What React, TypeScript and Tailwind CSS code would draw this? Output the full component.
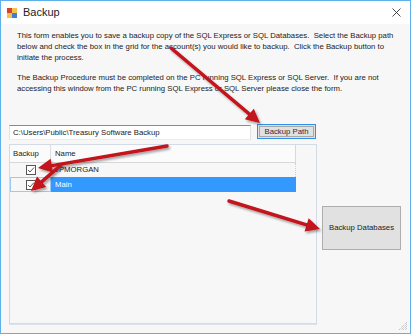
import { FC } from 'react';

type Pt = [number, number];

const arrows: [Pt, Pt][] = [
  [[170, 47], [259, 122]],
  [[166, 145], [37, 167]],
  [[60, 164], [30, 190]],
  [[228, 200], [319, 228]],
];

const headPoints = (from: Pt, to: Pt, len = 14, half = 7) => {
  const dx = to[0] - from[0];
  const dy = to[1] - from[1];
  const d = Math.hypot(dx, dy);
  const ux = dx / d;
  const uy = dy / d;
  const bx = to[0] - ux * len;
  const by = to[1] - uy * len;
  return {
    base: [bx, by] as Pt,
    pts: `${to[0]},${to[1]} ${bx - uy * half},${by + ux * half} ${bx + uy * half},${by - ux * half}`,
  };
};

const Arrows: FC = () => (
  <svg className="absolute inset-0 pointer-events-none" width={411} height={334}>
    <defs>
      <filter id="sh" x="-20%" y="-20%" width="140%" height="140%">
        <feDropShadow dx="1.5" dy="2" stdDeviation="1.2" floodColor="#000" floodOpacity="0.35" />
      </filter>
    </defs>
    {arrows.map(([from, to], i) => {
      const h = headPoints(from, to);
      return (
        <g key={i} filter="url(#sh)">
          <line
            x1={from[0]}
            y1={from[1]}
            x2={h.base[0]}
            y2={h.base[1]}
            stroke="#c3121b"
            strokeWidth={3.5}
            strokeLinecap="round"
          />
          <polygon points={h.pts} fill="#c3121b" />
        </g>
      );
    })}
  </svg>
);

const CheckBox: FC = () => (
  <div className="w-[10px] h-[10px] border border-[#555] bg-white flex items-center justify-center">
    <svg width="8" height="8" viewBox="0 0 8 8">
      <path d="M1 4 L3 6 L7 1.5" fill="none" stroke="#444" strokeWidth="0.9" />
    </svg>
  </div>
);

const AppIcon: FC = () => (
  <svg width="10" height="10" viewBox="0 0 10 10">
    <rect x="0" y="0" width="5" height="5" fill="#d9412b" />
    <rect x="5" y="0" width="5" height="5" fill="#f2c14e" />
    <rect x="0" y="5" width="5" height="5" fill="#f2c14e" />
    <rect x="5" y="5" width="5" height="5" fill="#3d7fd1" />
  </svg>
);

const Grip: FC = () => (
  <svg className="absolute right-[2px] bottom-[2px]" width="9" height="9" viewBox="0 0 9 9">
    <path d="M8 2 L2 8 M8 4 L4 8 M8 6 L6 8 M8 0 L0 8" stroke="#9a9a9a" strokeWidth="0.8" strokeDasharray="1 1" />
  </svg>
);

const p1 = [
  'This form enables you to save a backup copy of the SQL Express or SQL Databases.  Select the Backup path',
  'below and check the box in the grid for the account(s) you would like to backup.  Click the Backup button to',
  'initiate the process.',
];
const p2 = [
  'The Backup Procedure must be completed on the PC running SQL Express or SQL Server.  If you are not',
  'accessing this window from the PC running SQL Express or SQL Server please close the form.',
];

const App: FC = () => {
  return (
    <div
      className="relative w-[411px] h-[334px] bg-[#f7f7f7] border border-[#5db0ea] overflow-hidden text-[#1b1b1b]"
      style={{ fontFamily: '"Liberation Sans", Arial, sans-serif' }}
    >
      <div className="h-[23px] bg-white flex items-center pl-[6px] pr-[9px]">
        <AppIcon />
        <span className="ml-[6px] text-[11px] text-[#222]">Backup</span>
        <span className="ml-auto">
          <svg width="9" height="9" viewBox="0 0 9 9">
            <path d="M0.5 0.5 L8.5 8.5 M8.5 0.5 L0.5 8.5" stroke="#333" strokeWidth="0.9" />
          </svg>
        </span>
      </div>

      <div className="px-[8px]">
        <div className="pl-[8px] mt-[6px] text-[7.75px] leading-[11px] whitespace-pre">
          {p1.map((l) => (
            <div key={l}>{l}</div>
          ))}
        </div>
        <div className="pl-[8px] mt-[9px] text-[7.75px] leading-[11px] whitespace-pre">
          {p2.map((l) => (
            <div key={l}>{l}</div>
          ))}
        </div>

        <div className="flex items-start mt-[31px]">
          <div className="w-[242px] h-[15px] bg-white border-t border-t-[#8a8a8a] border-x border-x-[#e2e2e2] border-b border-b-[#eeeeee] flex items-center pl-[3px] text-[7.75px] whitespace-nowrap">
            C:\Users\Public\Treasury Software Backup
          </div>
          <button className="ml-[6px] -mt-[1px] w-[59px] h-[15px] border border-[#2f8fea] p-px bg-[#e1e1e1]">
            <div className="w-full h-full border border-[#a8a8a8] flex items-center justify-center text-[7.75px] text-[#33283a] leading-none">
              Backup Path
            </div>
          </button>
        </div>

        <div className="flex items-start mt-[4px]">
          <div className="w-[308px] h-[180px] border border-[#d3dce6] border-l-[#d9d9d9] shadow-[0_1px_0_#dbe3ec] bg-[#f7f7f7]">
            <div className="w-[286px] h-[18px] flex bg-[#fbfbfb] border-b border-[#d8d8d8] border-r text-[7.75px]">
              <div className="w-[41px] border-r border-[#dedede] flex items-center pl-[3px]">Backup</div>
              <div className="flex-1 flex items-center pl-[4px]">Name</div>
            </div>
            <div className="w-[286px] h-[14px] flex text-[7.75px] border-r border-dotted border-[#cfcfcf]">
              <div className="w-[41px] flex items-center justify-center">
                <CheckBox />
              </div>
              <div className="flex-1 flex items-center pl-[4px]">JPMORGAN</div>
            </div>
            <div className="w-[286px] h-[15px] flex text-[7.75px]">
              <div className="w-[41px] flex items-center justify-center border border-[#9cc9f2]">
                <CheckBox />
              </div>
              <div className="flex-1 flex items-center pl-[4px] bg-[#3399ff] text-white">Main</div>
            </div>
          </div>
          <button className="ml-[5px] mt-[62px] w-[79px] h-[44px] bg-[#e1e1e1] border border-[#adadad] text-[7.75px] text-[#1b1b1b] flex items-center justify-center">
            Backup Databases
          </button>
        </div>
      </div>

      <Grip />
      <Arrows />
    </div>
  );
};

export default App;
